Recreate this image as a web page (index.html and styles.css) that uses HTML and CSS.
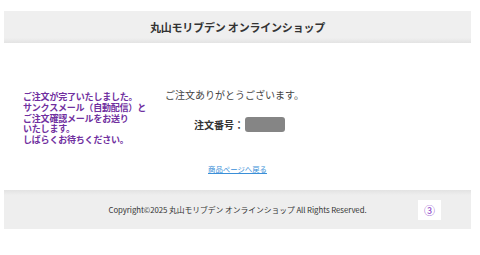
FILE: index.html
```html
<!DOCTYPE html>
<html lang="ja">
<head>
  <meta charset="UTF-8">
  <meta name="viewport" content="width=device-width, initial-scale=1.0">
  <title>丸山モリブデン オンラインショップ</title>
  <link rel="stylesheet" href="styles.css">
</head>
<body>
  <div class="page">
    <header class="site-header">
      <h1>丸山モリブデン オンラインショップ</h1>
    </header>

    <main class="thanks">
      <div class="notice">
        <p>ご注文が完了いたしました。</p>
        <p>サンクスメール（自動配信）と</p>
        <p>ご注文確認メールをお送り</p>
        <p>いたします。</p>
        <p>しばらくお待ちください。</p>
      </div>
      <div class="result">
        <p class="message">ご注文ありがとうございます。</p>
        <p class="order-no">注文番号：<span class="masked"></span></p>
        <a class="back" href="#">商品ページへ戻る</a>
      </div>
    </main>

    <footer class="site-footer">
      <p>Copyright©2025 丸山モリブデン オンラインショップ All Rights Reserved.</p>
      <span class="page-top">③</span>
    </footer>
  </div>
</body>
</html>
```

FILE: styles.css
```css
body {
  margin: 0;
  background: #fff;
  font-family: "Noto Sans CJK JP", "Noto Sans", sans-serif;
  color: #333;
}
.page { width: 467px; margin-left: 4px; margin-top: 11px; }

.site-header {
  height: 32px;
  background: linear-gradient(to bottom, #efefef 0, #efefef 27px, #e3e3e3 32px);
  display: flex;
  align-items: center;
  justify-content: center;
}
.site-header h1 {
  margin: 0;
  font-size: 11px;
  font-weight: bold;
  color: #333;
  letter-spacing: -0.2px;
}

.thanks {
  display: flex;
  height: 147px;
}
.notice {
  width: 142px;
  margin-top: 49px;
  padding-left: 19px;
  font-size: 9px;
  font-weight: bold;
  color: #7030a0;
  letter-spacing: -0.2px;
}
.notice p {
  margin: 0;
  height: 10.75px;
  line-height: 10.75px;
  white-space: nowrap;
}
.result {
  display: flex;
  flex-direction: column;
  align-items: flex-start;
  padding-top: 46px;
}
.message {
  margin: 0;
  font-size: 10px;
  line-height: 12px;
  color: #444;
}
.order-no {
  margin: 16px 0 0 29px;
  display: flex;
  align-items: center;
  font-size: 10px;
  font-weight: bold;
  color: #333;
}
.masked {
  display: inline-block;
  width: 40px;
  height: 15px;
  margin-left: 1px;
  background: #858585;
  border-radius: 3px;
  filter: blur(0.6px);
}
.back {
  margin: 32px 0 0 43px;
  font-size: 7.4px;
  line-height: 10px;
  color: #3a8fd8;
  text-decoration: underline;
}

.site-footer {
  position: relative;
  height: 39px;
  background: linear-gradient(to bottom, #e2e2e2 0, #eeeeee 5px, #eeeeee 100%);
  display: flex;
  align-items: center;
  justify-content: center;
}
.site-footer p {
  margin: 0;
  font-size: 7.8px;
  color: #333;
  letter-spacing: -0.05px;
}
.page-top {
  position: absolute;
  left: 414px;
  top: 10px;
  width: 23px;
  height: 20px;
  background: #fff;
  color: #8a3fc8;
  font-size: 11px;
  line-height: 20px;
  text-align: center;
}
```
